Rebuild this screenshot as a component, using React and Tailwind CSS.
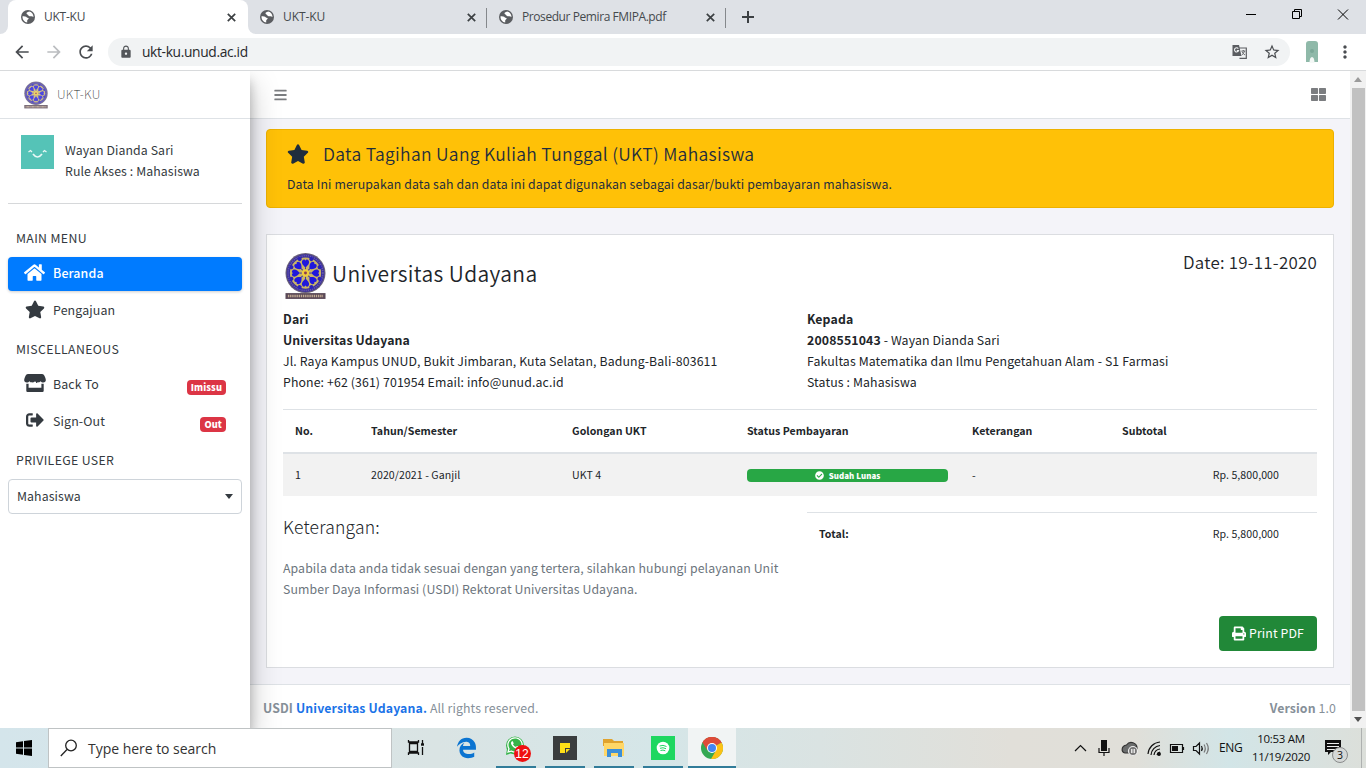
import React from "react";
import { FaHome, FaStar, FaSignOutAlt, FaPrint, FaCheckCircle, FaThLarge, FaBars, FaEdgeLegacy, FaWhatsapp } from "react-icons/fa";
import { MdLock, MdRefresh, MdArrowBack, MdArrowForward, MdStarBorder, MdMoreVert } from "react-icons/md";

const PETALS = [0, 45, 90, 135, 180, 225, 270, 315];

function Seal({ className }) {
  return (
    <svg className={className} viewBox="0 0 42 48">
      <circle cx="21" cy="21" r="20.5" fill="#6a6178" />
      <circle cx="21" cy="21" r="19.3" fill="#3a2fa0" />
      <circle cx="21" cy="21" r="17.8" fill="none" stroke="#6a5ca8" strokeWidth="1.6" strokeDasharray="1.2 1" />
      <circle cx="21" cy="21" r="16" fill="#c9b566" />
      {PETALS.map((a) => (
        <g key={a} transform={`rotate(${a} 21 21)`}>
          <path d="M21 15.2C18.500 13 16.300 10.500 17.800 8C19 6.400 20.600 7 21 8.400C21.400 7 23 6.400 24.200 8C25.700 10.500 23.500 13 21 15.200Z" fill="#2018dc" />
          <path d="M21 17.500V15" stroke="#3a2fa0" strokeWidth="1" />
        </g>
      ))}
      {PETALS.map((a) => (
        <circle key={a} cx="21" cy="5.4" r="2.1" fill="#2b23b8" transform={`rotate(${a + 22.5} 21 21)`} />
      ))}
      <circle cx="21" cy="21" r="3.8" fill="#f0cc3c" />
      <circle cx="21" cy="21" r="1.5" fill="#8a3c50" />
      <rect x="0.5" y="41.5" width="41" height="6" fill="#5b4a58" />
      <path d="M3 44.5H39" stroke="#c3ab93" strokeWidth="2.4" strokeDasharray="1.4 0.8" />
    </svg>
  );
}

function StoreIcon({ className }) {
  return (
    <svg className={className} viewBox="0 0 22 18" fill="currentColor">
      <path d="M4 0H18C19.500 0 20.200 1.200 21 3C22.600 6.400 21.800 8.600 19.300 8.600C18 8.600 17.200 8 16.500 7.200C15.600 8.800 12 8.800 11 7.200C10 8.800 6.400 8.800 5.500 7.200C4.800 8 4 8.600 2.700 8.600C0.200 8.600 -0.600 6.400 1 3C1.800 1.200 2.500 0 4 0Z" />
      <path d="M2.300 9.800H4.600V13.800H17.400V9.800H19.700V16.800Q19.700 18 18.500 18H3.500Q2.300 18 2.300 16.800Z" />
    </svg>
  );
}

function Globe({ className }) {
  return (
    <svg className={className} viewBox="0 0 14 14">
      <circle cx="7" cy="7" r="7" fill="#5b5d61" />
      <path d="M1.500 6.200C3 6.300 5.400 6.200 5.700 7.200C5.900 8 7.600 7.500 7.700 8.600C7.600 9.600 6.200 9.600 6.200 10.600V12.400C3.600 12.200 1.300 9.800 1.500 6.200Z" fill="#fff" />
      <path d="M8 1.600C7 2.400 5.300 2.300 5.500 3.500C5.700 4.600 7 4.200 7.300 5.200C7.600 6.300 9 6.400 10 6.200C11 6 11.800 6.700 12.500 6.900C12.500 4.300 10.600 1.900 8 1.600Z" fill="#fff" />
    </svg>
  );
}

function Tab({ title, active, divider, textClass }) {
  return (
    <div className={`relative flex h-[34px] items-center ${active ? "w-[240px] rounded-t-lg bg-white pl-[13px]" : "w-[239px] pl-[11px]"}`}>
      <Globe className="h-[14px] w-[14px] shrink-0" />
      <span className={`ml-[9px] flex-1 whitespace-nowrap font-['Open_Sans',sans-serif] text-[12px] leading-[34px] text-[#45494d] ${textClass}`}>{title}</span>
      <svg className="mr-[12px] h-[9px] w-[9px] shrink-0" viewBox="0 0 9 9"><path d="M0.800 0.800L8.200 8.200M8.200 0.800L0.800 8.200" stroke="#3c4043" strokeWidth="1.700" /></svg>
      {divider && <div className="absolute right-[1px] top-2 h-5 w-px bg-[#85888c]" />}
    </div>
  );
}

function Browser() {
  return (
    <>
      <div className="flex h-[34px] bg-[#dee1e6]">
        <div className="w-2 bg-white"><div className="h-full rounded-br-lg bg-[#dee1e6]" /></div>
        <Tab title="UKT-KU" active textClass="tracking-[-0.25px]" />
        <div className="-mr-[7px] w-2 bg-white"><div className="h-full rounded-bl-lg bg-[#dee1e6]" /></div>
        <Tab title="UKT-KU" divider textClass="tracking-[-0.1px]" />
        <Tab title="Prosedur Pemira FMIPA.pdf" divider textClass="tracking-[-0.42px]" />
        <svg className="ml-[15px] mt-[11px] h-3 w-3" viewBox="0 0 12 12"><path d="M6 0V12M0 6H12" stroke="#3c4043" strokeWidth="2" /></svg>
        <div className="flex-1" />
        <svg className="h-[34px] w-[120px] text-black" viewBox="0 0 120 34" fill="none" stroke="currentColor">
          <path d="M0 14.5h10M46.500 11.500h7v7h-7zM48.500 11.500v-2h7v7h-2M92 9.500l10 10M102 9.500l-10 10" />
        </svg>
      </div>
      <div className="flex h-[37px] items-center border-b border-[#d8dadc] bg-white">
        <MdArrowBack className="ml-[12px] h-[20px] w-[20px] text-[#4a4d51]" />
        <MdArrowForward className="ml-[12px] h-[20px] w-[20px] text-[#bbbdc0]" />
        <MdRefresh className="ml-[12px] h-[20px] w-[20px] text-[#4a4d51]" />
        <div className="ml-[12px] flex h-7 w-[1182px] items-center rounded-full bg-[#f1f3f4]">
          <MdLock className="ml-[11px] h-[14px] w-[14px] text-[#53565a]" />
          <span className="ml-[9px] flex-1 font-['Open_Sans',sans-serif] text-[13.8px] tracking-[-0.35px] text-[#26282b]">ukt-ku.unud.ac.id</span>
          <svg className="mr-[16px] h-[14px] w-[15px]" viewBox="0 0 15 14">
            <path d="M7 3H14.300V13.300H7.500" fill="none" stroke="#5b5d61" strokeWidth="1.200" />
            <path d="M0.500 0H7L9.500 11H0.500Z" fill="#5b5d61" />
            <path d="M6.300 3.600A2.100 2.100 0 1 0 6.600 5.600H4.800" fill="none" stroke="#f1f3f4" strokeWidth="1.100" />
            <path d="M9.500 6H13.300M11.300 5V6M12.500 6Q12 8.500 9.800 10M10 6.500Q11 9 13 10" fill="none" stroke="#5b5d61" strokeWidth="0.900" />
          </svg>
          <MdStarBorder className="mr-[9px] h-[18px] w-[18px] text-[#4a4d51]" />
        </div>
        <svg className="ml-[15px] h-[22px] w-[14px]" viewBox="0 0 14 22">
          <path d="M1 3Q1 0 4 0H10Q13 0 13 3V21H1Z" fill="#8fb9a9" />
          <path d="M4.500 22C4.500 18 5.500 16 7 16C8.500 16 9.500 18 9.500 22Z" fill="#f4f8f6" />
          <circle cx="7" cy="10" r="2" fill="#7ba898" />
        </svg>
        <MdMoreVert className="ml-[16px] h-[20px] w-[20px] text-[#4a4d51]" />
      </div>
    </>
  );
}

function NavItem({ icon: Icon, label, badge, active, iconClass }) {
  return (
    <div className={`mx-2 flex h-[34px] items-center rounded-[4px] ${active ? "bg-[#007bff] font-medium text-white shadow-[0_1px_3px_rgba(0,0,0,0.2)]" : "text-[#343a40]"}`}>
      <div className="ml-[15px] flex w-[23px] justify-center pb-1"><Icon className={iconClass} /></div>
      <span className="ml-[7px] flex-1 pb-[2px] text-[12.4px] tracking-[0.12px]">{label}</span>
      {badge && <span className="mr-4 mt-1 flex h-[15px] items-center rounded-[4px] bg-[#dc3545] px-1 pt-px text-[9.2px] font-black text-white">{badge}</span>}
    </div>
  );
}

function Sidebar() {
  return (
    <aside className="z-10 flex w-[250px] shrink-0 flex-col bg-white text-[12.3px] tracking-[0.1px] text-[#343a40] shadow-[0_14px_28px_rgba(0,0,0,0.25),0_10px_10px_rgba(0,0,0,0.22)]">
      <div className="flex h-12 items-center border-b border-[#dee2e6]">
        <Seal className="ml-[24px] h-[28px] w-[24px] opacity-80" />
        <span className="ml-[9px] font-thin tracking-[0.3px] text-[#222]">UKT-KU</span>
      </div>
      <div className="mx-2 flex h-[85px] border-b border-[#d6d8da] pt-4">
        <svg className="ml-[13px] h-[34px] w-[33px]" viewBox="0 0 33 34">
          <path d="M0 0H33V34H0Z" fill="#55c3b7" />
          <path d="M12 19Q16.500 25 21 19" fill="none" stroke="#e9f8f6" strokeWidth="1.700" />
          <path d="M7.500 17L9.500 15.500L11 17M22 17L23.500 15.500L25.500 17" fill="none" stroke="#e9f8f6" strokeWidth="1.300" />
        </svg>
        <div className="ml-[11px] mt-[5px] leading-[21px]">
          <div>Wayan Dianda Sari</div>
          <div>Rule Akses : Mahasiswa</div>
        </div>
      </div>
      <div className="ml-4 mt-6 h-[21px] leading-[21px] tracking-[0.35px]">MAIN MENU</div>
      <div className="mt-2"><NavItem icon={FaHome} iconClass="h-[21px] w-[21px]" label="Beranda" active /></div>
      <div className="mt-[3px]"><NavItem icon={FaStar} iconClass="h-[19px] w-[20px]" label="Pengajuan" /></div>
      <div className="ml-4 mt-[11px] h-[21px] leading-[21px] tracking-[0.38px]">MISCELLANEOUS</div>
      <div className="mt-2"><NavItem icon={StoreIcon} iconClass="h-[18px] w-[22px]" label="Back To" badge="Imissu" /></div>
      <div className="mt-[3px]"><NavItem icon={FaSignOutAlt} iconClass="h-[18px] w-[18px]" label="Sign-Out" badge="Out" /></div>
      <div className="ml-4 mt-[11px] h-[21px] leading-[21px] tracking-[0.35px]">PRIVILEGE USER</div>
      <div className="mx-2 mt-2 flex h-[35px] items-center justify-between rounded-[4px] border border-[#ced4da] pl-2 pr-[8px]">
        Mahasiswa
        <svg className="h-[5px] w-[8px]" viewBox="0 0 8 5"><path d="M0 0H8L4 5Z" fill="#343a40" /></svg>
      </div>
    </aside>
  );
}

function Invoice() {
  return (
    <div className="mx-4 mt-[26px] h-[434px] border border-[#dbdde1] bg-white px-4 tracking-[0.12px] text-[#212529]">
      <div className="flex h-[74px] justify-between">
        <div className="flex">
          <Seal className="ml-[2px] mt-[17px] h-[48px] w-[41px]" />
          <span className="ml-[6px] mt-[21px] text-[21px] font-[350] leading-[34px] tracking-[0.38px]">Universitas Udayana</span>
        </div>
        <span className="mt-[14px] text-[16.9px] font-[350] leading-[26px] tracking-[0.25px]">Date: 19-11-2020</span>
      </div>
      <div className="flex h-[100px] text-[12.3px] leading-[21px]">
        <div className="w-[524px]">
          <div className="font-bold">Dari</div>
          <div className="font-bold">Universitas Udayana</div>
          <div>Jl. Raya Kampus UNUD, Bukit Jimbaran, Kuta Selatan, Badung-Bali-803611</div>
          <div>Phone: +62 (361) 701954 Email: info@unud.ac.id</div>
        </div>
        <div>
          <div className="font-bold">Kepada</div>
          <div><b>2008551043</b> - Wayan Dianda Sari</div>
          <div>Fakultas Matematika dan Ilmu Pengetahuan Alam - S1 Farmasi</div>
          <div>Status : Mahasiswa</div>
        </div>
      </div>
      <div className="grid h-[45px] grid-cols-[76px_201px_175px_225px_150px_1fr] items-center border-y border-b-2 border-[#dee2e6] pl-3 text-[10.6px] font-bold tracking-[0.04px]">
        <span>No.</span><span>Tahun/Semester</span><span>Golongan UKT</span><span>Status Pembayaran</span><span>Keterangan</span><span>Subtotal</span>
      </div>
      <div className="grid h-[42px] grid-cols-[76px_201px_175px_225px_150px_1fr] items-center bg-[#f2f2f2] pl-3 text-[10.6px] tracking-[0.06px]">
        <span>1</span><span>2020/2021 - Ganjil</span><span>UKT 4</span>
        <span className="flex h-[13px] w-[201px] items-center justify-center gap-[5px] rounded-[4px] bg-[#28a745] pt-px text-[7.9px] font-black text-white"><FaCheckCircle className="h-[9px] w-[9px]" />Sudah Lunas</span>
        <span>-</span><span className="pr-[38px] text-right">Rp. 5,800,000</span>
      </div>
      <div className="flex h-[120px]">
        <div className="w-[524px]">
          <div className="mt-[18px] text-[17.5px] font-light leading-[26px] tracking-[0.2px]">Keterangan:</div>
          <div className="mt-[18px] text-[12.3px] leading-[21px] tracking-[0.11px] text-[#6c757d]">Apabila data anda tidak sesuai dengan yang tertera, silahkan hubungi pelayanan Unit<br />Sumber Daya Informasi (USDI) Rektorat Universitas Udayana.</div>
        </div>
        <div className="mt-4 flex h-[43px] flex-1 items-center justify-between border-t border-[#dee2e6] pl-3 pr-[38px] text-[10.6px] tracking-[0.06px]">
          <b>Total:</b><span>Rp. 5,800,000</span>
        </div>
      </div>
      <div className="flex justify-end">
        <div className="flex h-[35px] w-[98px] items-center justify-center gap-[3px] rounded-[4px] bg-[#218838] text-[12.3px] text-white"><FaPrint className="h-[15px] w-[14px]" />Print PDF</div>
      </div>
    </div>
  );
}

function Main() {
  return (
    <main className="flex w-[1100px] shrink-0 flex-col bg-[#f4f4f9]">
      <div className="flex h-12 items-center justify-between border-b border-[#dee2e6] bg-white pl-6 pr-[24px] text-[#7b7d80]">
        <FaBars className="h-[14px] w-[13px]" />
        <FaThLarge className="h-[15px] w-[15px]" />
      </div>
      <div className="mx-4 mt-[10px] h-[79px] rounded-[4px] border border-[#edb100] bg-[#ffc107] pl-5 text-[#1f2d3d]">
        <div className="mt-[10px] flex h-[28px] items-center">
          <FaStar className="h-[20px] w-[22px]" />
          <span className="ml-[14px] text-[17.5px] font-[350] tracking-[0.3px]">Data Tagihan Uang Kuliah Tunggal (UKT) Mahasiswa</span>
        </div>
        <div className="mt-[6px] text-[12.3px] leading-[21px] tracking-[0.11px]">Data Ini merupakan data sah dan data ini dapat digunakan sebagai dasar/bukti pembayaran mahasiswa.</div>
      </div>
      <Invoice />
      <footer className="mt-4 flex h-[44px] items-center justify-between border-t border-[#dee2e6] bg-white pl-[13px] pr-[14px] pt-1 text-[12.3px] tracking-[0.12px] text-[#869099]">
        <span><b>USDI <span className="text-[#1a73e8]">Universitas Udayana.</span></b> All rights reserved.</span>
        <span><b>Version</b> 1.0</span>
      </footer>
    </main>
  );
}

function TaskIcon({ children, open, active }) {
  return (
    <div className={`flex h-10 flex-col items-center ${active ? "ml-px w-12 bg-[#f1f4f4]" : "w-[49px]"}`}>
      <div className="flex h-[38px] items-center justify-center pt-[2px]">{children}</div>
      {open && <div className={`h-[2px] bg-[#317c99] ${active ? "w-full" : "w-10"}`} />}
    </div>
  );
}

function Taskbar() {
  return (
    <div className="flex h-10 bg-[linear-gradient(90deg,#d4e5eb_0%,#dae4e4_32%,#d5e6e8_48%,#dae3e2_60%,#e1dfd9_74%,#e0dfd9_83%,#d2e5e7_90%,#dcdfda_100%)] font-['Open_Sans',sans-serif] text-[#111]">
      <svg className="ml-4 mt-3 h-4 w-4" viewBox="0 0 16 16"><path d="M0 2.200L7 1.200V7.500H0ZM8 1L16 0V7.500H8ZM0 8.500H7V14.800L0 13.800ZM8 8.500H16V16L8 15Z" /></svg>
      <div className="ml-4 flex h-10 w-[344px] items-center border border-[#bfc3c4] bg-white">
        <svg className="ml-[11px] h-[18px] w-[18px]" viewBox="0 0 18 18" fill="none" stroke="#222" strokeWidth="1.300"><circle cx="11" cy="6.500" r="5.300" /><path d="M7 10.500L0.800 17" /></svg>
        <span className="ml-[10px] text-[14px] tracking-[-0.03px] text-[#333]">Type here to search</span>
      </div>
      <svg className="ml-[15px] mt-[11px] h-[18px] w-[18px]" viewBox="0 0 18 18" fill="none" stroke="#111" strokeWidth="1.300">
        <path d="M2.500 4.500H10.500V12.500H2.500ZM1.500 1V3H11.500V1M1.500 16V14H11.500V16M15.500 1V5M15.500 8V16" /><path d="M14 5.500H17" strokeWidth="2.400" />
      </svg>
      <div className="ml-[17px] flex">
        <TaskIcon><FaEdgeLegacy className="h-[22px] w-[21px] text-[#0b74d1]" /></TaskIcon>
        <TaskIcon open>
          <div className="relative">
            <svg className="h-6 w-6" viewBox="0 0 24 24"><circle cx="11" cy="9.500" r="9" fill="#35b449" /><path d="M2 19L3 13L8 17Z" fill="#35b449" /></svg>
            <FaWhatsapp className="absolute left-[2px] top-0 h-[18px] w-[18px] text-white" />
            <div className="absolute left-[10px] top-[9px] flex h-[17px] w-[17px] items-center justify-center rounded-full bg-[#ef1010] font-['Liberation_Sans'] text-[12px] text-white">12</div>
          </div>
        </TaskIcon>
        <TaskIcon open><svg className="h-6 w-6" viewBox="0 0 24 24"><path d="M0 0H24V24H0Z" fill="#3a3d3e" /><path d="M7 7H17V13L13 17H7Z" fill="#ffe017" /><path d="M12 12H18V17H12Z" fill="#3a3d3e" /><path d="M13 17V13H17Z" fill="#ffe017" /></svg></TaskIcon>
        <TaskIcon open><svg className="h-[20px] w-[22px]" viewBox="0 0 22 20"><path d="M0 1H9L11 3H20V8H0Z" fill="#e0a32e" /><path d="M1 5H21V18H1Z" fill="#ffd767" /><path d="M4 19V11H19V19H15V15H8V19Z" fill="#3c8fd8" /></svg></TaskIcon>
        <TaskIcon open><svg className="h-6 w-6" viewBox="0 0 24 24"><path d="M0 0H24V24H0Z" fill="#1ed760" /><circle cx="12" cy="12" r="6.300" fill="#fff" /><path d="M8.500 10Q12 8.500 15.500 10.500M9 12.300Q12 11 15 12.700M9.500 14.500Q12 13.500 14.300 14.800" fill="none" stroke="#1ed760" /></svg></TaskIcon>
        <TaskIcon open active>
          <svg className="h-[22px] w-[22px]" viewBox="0 0 22 22">
            <circle cx="11" cy="11" r="11" fill="#34a853" />
            <path d="M11 11L1.500 5.500A11 11 0 0 1 20.500 5.500Z" fill="#dd4b39" />
            <path d="M11 11L20.500 5.500A11 11 0 0 1 10 22L15 13.500Z" fill="#fbc116" />
            <path d="M11 6H20.700A11 11 0 0 0 1.500 5.500L6.500 13.500Z" fill="#dd4b39" />
            <circle cx="11" cy="11" r="5" fill="#fff" /><circle cx="11" cy="11" r="4" fill="#4285f4" />
          </svg>
        </TaskIcon>
      </div>
      <div className="flex-1" />
      <svg className="h-10 w-[140px] shrink-0" viewBox="0 0 140 40" fill="none" stroke="#111" strokeWidth="1.200">
        <path d="M2 23L7.500 17.500L13 23" />
        <rect x="28" y="12" width="6" height="11" fill="#111" stroke="none" /><path d="M26 20V24.500H36V20M31 25V28" />
        <path d="M52 25H58C56 19 62 17 64 20C64 15 57 12 53.500 17C48 18 48 24 52 25Z" fill="#6b6d6d" stroke="#333" /><circle cx="60" cy="23" r="4.500" fill="#777" stroke="#eee" /><path d="M58.800 21V25M61.200 21V25" stroke="#fff" />
        <path d="M75 26A13 13 0 0 1 87 14M78 27A10 10 0 0 1 87 17.500M81 27A7 7 0 0 1 87 21M84 27A4 4 0 0 1 87 24" /><circle cx="86" cy="26" r="1.300" fill="#111" />
        <path d="M97.500 16.500H109.500V24.500H97.500ZM110.500 19V22" /><path d="M99 18H105V23H99Z" fill="#111" stroke="none" />
        <path d="M120.500 18.500H123L126.500 15V26L123 22.500H120.500ZM128.500 18Q130 20.500 128.500 23" /><path d="M131 16.500Q133.500 20.500 131 24.500M133.500 15Q137 20.500 133.500 26" stroke="#777" />
      </svg>
      <span className="ml-[6px] w-[24px] whitespace-nowrap text-[12px] leading-10 tracking-[-0.3px]">ENG</span>
      <div className="ml-[3px] w-[70px] whitespace-nowrap pt-[2px] text-center text-[11.5px] leading-[18px] tracking-[-0.32px]"><div>10:53 AM</div><div>11/19/2020</div></div>
      <div className="relative ml-[2px] w-[48px]">
        <svg className="h-10 w-[48px]" viewBox="0 0 48 40"><path d="M7 12H23V24H13L10 27V24H7Z" fill="#111" /><path d="M9 15.500H21M9 18.500H21M9 21.500H17" stroke="#eee" /><circle cx="22" cy="27" r="7.500" fill="#d5d8d7" stroke="#8a8c8c" /><path d="M43.500 0V40" stroke="#aeb1b0" /></svg>
        <span className="absolute left-[19px] top-[20px] text-[10.500px] leading-[14px]">3</span>
      </div>
    </div>
  );
}

export default function App() {
  return (
    <div className="flex h-[768px] w-[1366px] flex-col overflow-hidden bg-white font-['Noto_Sans_CJK_JP',sans-serif]">
      <Browser />
      <div className="flex h-[657px] overflow-hidden">
        <Sidebar />
        <Main />
        <div className="flex flex-1 flex-col items-center justify-between bg-[#f1f1f1] py-[6px]">
          <svg className="h-[5px] w-2 shrink-0" viewBox="0 0 8 5"><path d="M0 5L4 0L8 5Z" fill="#9b9b9b" /></svg>
          <div className="my-[6px] w-[13px] flex-1 bg-[#c1c1c1]" />
          <svg className="h-[5px] w-2 shrink-0" viewBox="0 0 8 5"><path d="M0 0L4 5L8 0Z" fill="#505050" /></svg>
        </div>
      </div>
      <Taskbar />
    </div>
  );
}
